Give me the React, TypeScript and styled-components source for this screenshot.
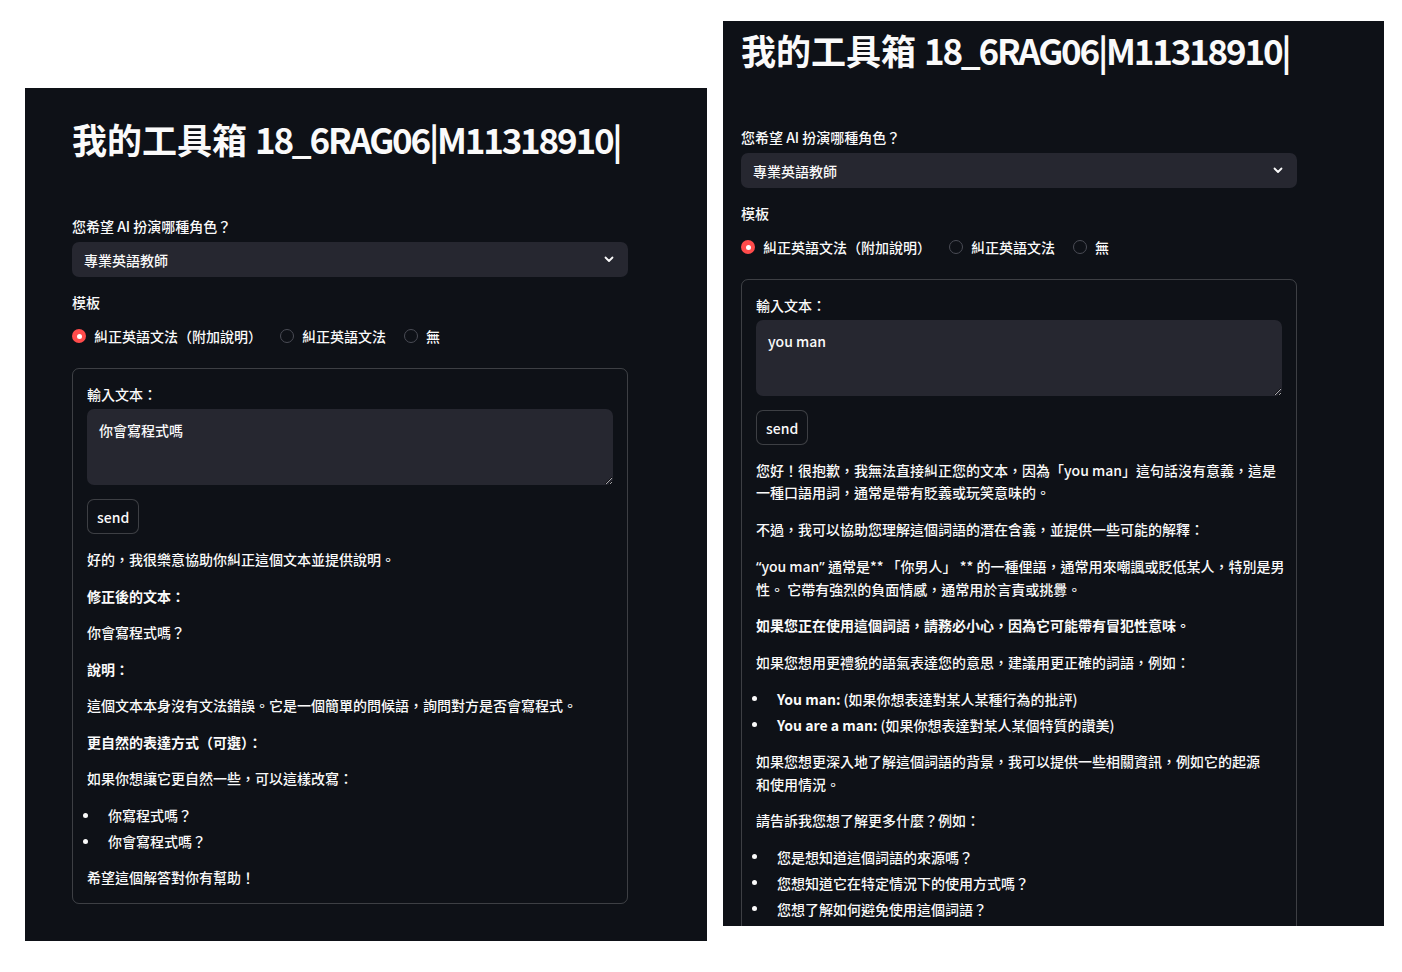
import React from "react";
import styled, { createGlobalStyle } from "styled-components";

const GlobalStyle = createGlobalStyle`
  html, body {
    margin: 0;
    padding: 0;
    background: #ffffff;
  }
  body {
    font-family: "Noto Sans CJK TC", "Noto Sans", sans-serif;
    -webkit-font-smoothing: antialiased;
  }
  * { box-sizing: border-box; }
`;

const Page = styled.div`
  width: 1402px;
  height: 972px;
  overflow: hidden;
  display: flex;
  align-items: flex-start;
  gap: 16px;
  padding-left: 25px;
`;

const Panel = styled.section<{ $top: number; $width: number; $height: number; $padLeft: number; $padTop: number }>`
  margin-top: ${(p) => p.$top}px;
  width: ${(p) => p.$width}px;
  height: ${(p) => p.$height}px;
  padding-left: ${(p) => p.$padLeft}px;
  padding-top: ${(p) => p.$padTop}px;
  background: #0e1117;
  color: #fafafa;
  overflow: hidden;
  flex-shrink: 0;
`;

const Content = styled.div`
  width: 556px;
  display: flex;
  flex-direction: column;
  gap: 14px;
`;

const Title = styled.h1`
  margin: 0 0 39px;
  font-size: 35px;
  line-height: 46px;
  font-weight: 700;
  color: #fafafa;
  white-space: nowrap;
`;

const TitleCode = styled.span`
  letter-spacing: -2.2px;
`;

const Field = styled.div`
  display: flex;
  flex-direction: column;
`;

const Label = styled.div<{ $gap: number }>`
  font-size: 14px;
  font-weight: 500;
  line-height: 22px;
  height: 22px;
  margin-bottom: ${(p) => p.$gap}px;
  color: #fafafa;
`;

const SelectBox = styled.div`
  height: 35px;
  background: #262730;
  border-radius: 7px;
  padding: 0 14px 0 12px;
  display: flex;
  align-items: center;
  justify-content: space-between;
  font-size: 14px;
  font-weight: 500;
  color: #fafafa;
`;

const RadioRow = styled.div`
  height: 24px;
  display: flex;
  align-items: center;
`;

const RadioOption = styled.label`
  display: flex;
  align-items: center;
  gap: 8px;
  margin-right: 18px;
  font-size: 14px;
  font-weight: 500;
  line-height: 22px;
  color: #fafafa;
`;

const RadioCircle = styled.span<{ $checked?: boolean }>`
  width: 14px;
  height: 14px;
  border-radius: 50%;
  display: grid;
  place-items: center;
  background: ${(p) => (p.$checked ? "#ff4b4b" : "#0e1117")};
  border: ${(p) => (p.$checked ? "none" : "1px solid #4a4c55")};
  &::after {
    content: "";
    width: 5px;
    height: 5px;
    border-radius: 50%;
    background: ${(p) => (p.$checked ? "#ffffff" : "transparent")};
  }
`;

const Form = styled.div`
  margin-top: 6px;
  border: 1px solid rgba(250, 250, 250, 0.2);
  border-radius: 7px;
  padding: 14px;
  display: flex;
  flex-direction: column;
`;

const TextArea = styled.textarea`
  width: 100%;
  height: 76px;
  background: #262730;
  border: none;
  border-radius: 7px;
  padding: 10px 12px;
  font-family: inherit;
  font-size: 14px;
  font-weight: 500;
  line-height: 22.4px;
  color: #fafafa;
  resize: vertical;
  outline: none;
  color-scheme: dark;
  display: block;
`;

const SendButton = styled.button`
  margin-top: 14px;
  align-self: flex-start;
  height: 35px;
  padding: 0 9px;
  border: 1px solid rgba(250, 250, 250, 0.2);
  border-radius: 7px;
  background: #0e1117;
  color: #fafafa;
  font-family: inherit;
  font-size: 14px;
  font-weight: 500;
`;

const Answer = styled.div`
  margin-top: 14px;
  font-size: 14px;
  font-weight: 500;
  line-height: 22.4px;
  color: #fafafa;
`;

const Para = styled.p`
  margin: 0 0 14.15px;
  &:last-child { margin-bottom: 0; }
`;

const Line = styled.span`
  display: block;
  white-space: nowrap;
`;

const Quote = styled.span`
  font-family: "Noto Sans", "Liberation Sans", sans-serif;
`;

const Strong = styled.strong`
  font-weight: 700;
`;

const List = styled.ul`
  margin: 0 0 14.15px;
  padding: 0;
  list-style: none;
  &:last-child { margin-bottom: 0; }
`;

const Item = styled.li`
  display: flex;
  align-items: flex-start;
  & + & { margin-top: 3.6px; }
  &::before {
    content: "";
    flex-shrink: 0;
    width: 5px;
    height: 5px;
    border-radius: 50%;
    background: #fafafa;
    margin: 8.7px 20.5px 0 -4.5px;
  }
`;

const Chevron = () => (
  <svg width="10" height="7" viewBox="0 0 10 7" fill="none">
    <path d="M1.5 1.5 L5 5 L8.5 1.5" stroke="#fafafa" strokeWidth="1.8" strokeLinecap="round" strokeLinejoin="round" />
  </svg>
);

const Header: React.FC = () => (
  <>
    <Title>
      我的工具箱 <TitleCode>18_6RAG06|M11318910|</TitleCode>
    </Title>
    <Field>
      <Label $gap={5}>您希望 AI 扮演哪種角色？</Label>
      <SelectBox>
        <span>專業英語教師</span>
        <Chevron />
      </SelectBox>
    </Field>
    <Field>
      <Label $gap={11}>模板</Label>
      <RadioRow>
        <RadioOption>
          <RadioCircle $checked />
          糾正英語文法（附加說明）
        </RadioOption>
        <RadioOption>
          <RadioCircle />
          糾正英語文法
        </RadioOption>
        <RadioOption>
          <RadioCircle />
          無
        </RadioOption>
      </RadioRow>
    </Field>
  </>
);

const InputArea: React.FC<{ value: string }> = ({ value }) => (
  <>
    <Label $gap={4}>輸入文本：</Label>
    <TextArea readOnly value={value} />
    <SendButton>send</SendButton>
  </>
);

export default function App() {
  return (
    <>
      <GlobalStyle />
      <Page>
        <Panel $top={88} $width={682} $height={853} $padLeft={47} $padTop={28}>
          <Content>
            <Header />
            <Form>
              <InputArea value="你會寫程式嗎" />
              <Answer>
                <Para>好的，我很樂意協助你糾正這個文本並提供說明。</Para>
                <Para><Strong>修正後的文本：</Strong></Para>
                <Para>你會寫程式嗎？</Para>
                <Para><Strong>說明：</Strong></Para>
                <Para>這個文本本身沒有文法錯誤。它是一個簡單的問候語，詢問對方是否會寫程式。</Para>
                <Para><Strong>更自然的表達方式（可選）：</Strong></Para>
                <Para>如果你想讓它更自然一些，可以這樣改寫：</Para>
                <List>
                  <Item>你寫程式嗎？</Item>
                  <Item>你會寫程式嗎？</Item>
                </List>
                <Para>希望這個解答對你有幫助！</Para>
              </Answer>
            </Form>
          </Content>
        </Panel>
        <Panel $top={21} $width={661} $height={905} $padLeft={18} $padTop={6}>
          <Content>
            <Header />
            <Form>
              <InputArea value="you man" />
              <Answer>
                <Para>
                  <Line>您好！很抱歉，我無法直接糾正您的文本，因為「you man」這句話沒有意義，這是</Line>
                  <Line>一種口語用詞，通常是帶有貶義或玩笑意味的。</Line>
                </Para>
                <Para>不過，我可以協助您理解這個詞語的潛在含義，並提供一些可能的解釋：</Para>
                <Para>
                  <Line><Quote>“</Quote>you man<Quote>”</Quote> 通常是** 「你男人」 ** 的一種俚語，通常用來嘲諷或貶低某人，特別是男</Line>
                  <Line>性。 它帶有強烈的負面情感，通常用於言責或挑釁。</Line>
                </Para>
                <Para><Strong>如果您正在使用這個詞語，請務必小心，因為它可能帶有冒犯性意味。</Strong></Para>
                <Para>如果您想用更禮貌的語氣表達您的意思，建議用更正確的詞語，例如：</Para>
                <List>
                  <Item><span><Strong>You man:</Strong> (如果你想表達對某人某種行為的批評)</span></Item>
                  <Item><span><Strong>You are a man:</Strong> (如果你想表達對某人某個特質的讚美)</span></Item>
                </List>
                <Para>
                  <Line>如果您想更深入地了解這個詞語的背景，我可以提供一些相關資訊，例如它的起源</Line>
                  <Line>和使用情況。</Line>
                </Para>
                <Para>請告訴我您想了解更多什麼？例如：</Para>
                <List>
                  <Item>您是想知道這個詞語的來源嗎？</Item>
                  <Item>您想知道它在特定情況下的使用方式嗎？</Item>
                  <Item>您想了解如何避免使用這個詞語？</Item>
                </List>
              </Answer>
            </Form>
          </Content>
        </Panel>
      </Page>
    </>
  );
}
